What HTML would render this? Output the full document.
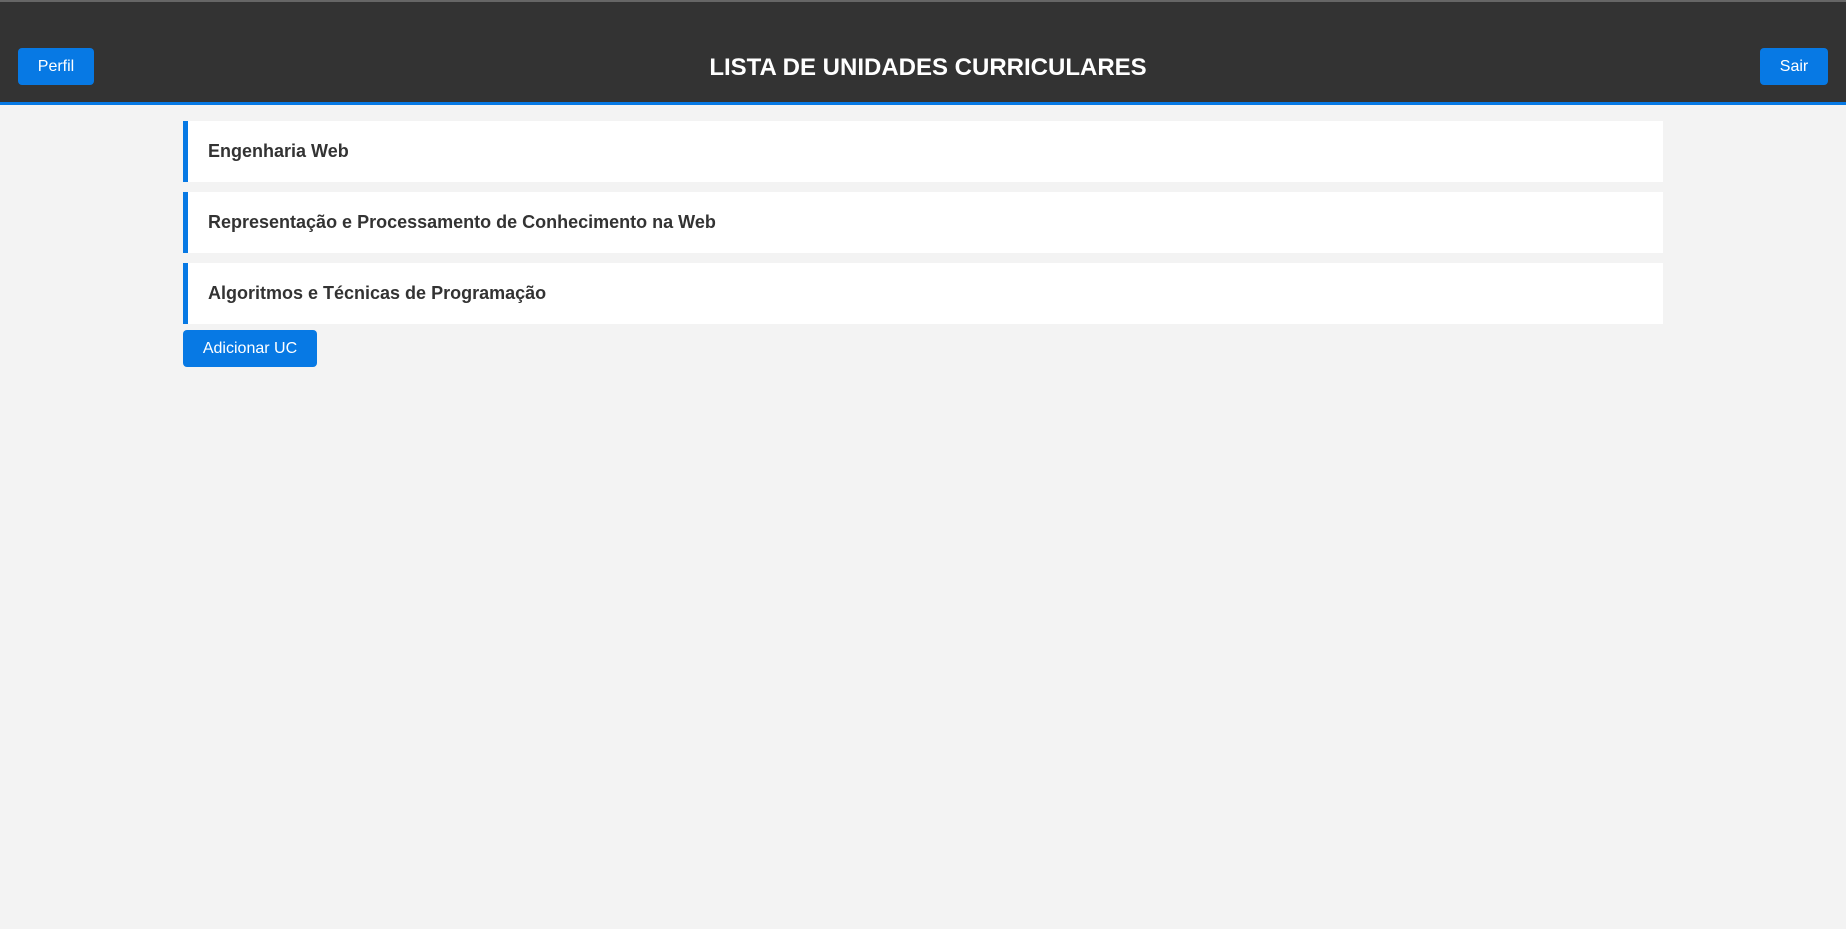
<!DOCTYPE html>
<html><head><meta charset="utf-8"><style>
html,body{margin:0;padding:0;background:#f3f3f3;font-family:"Liberation Sans",Arial,sans-serif;width:1846px;height:929px;overflow:hidden}
.hdr{position:absolute;left:0;top:0;width:1846px;height:102px;background:#333;border-top:2px solid #666;box-sizing:border-box;border-bottom:0}
.line{position:absolute;left:0;top:102px;width:1846px;height:3px;background:#0779e4}
.btn{position:absolute;background:#0779e4;color:#fff;border-radius:4px;font-size:16px;display:flex;align-items:center;justify-content:center}
.title{position:absolute;left:5px;width:1846px;top:54px;text-align:center;color:#fff;font-weight:bold;font-size:24px}
.card{position:absolute;left:183px;width:1480px;height:61px;background:#fff;border-left:5px solid #0779e4;box-sizing:border-box;padding-left:20px;display:flex;align-items:center;font-weight:bold;font-size:18px;color:#333}
</style></head><body>
<div class="hdr"></div><div class="line"></div>
<div class="btn" style="left:18px;top:48px;width:76px;height:37px">Perfil</div>
<div class="title">LISTA DE UNIDADES CURRICULARES</div>
<div class="btn" style="left:1760px;top:48px;width:68px;height:37px">Sair</div>
<div class="card" style="top:121px">Engenharia Web</div>
<div class="card" style="top:192px">Representação e Processamento de Conhecimento na Web</div>
<div class="card" style="top:263px">Algoritmos e Técnicas de Programação</div>
<div class="btn" style="left:183px;top:330px;width:134px;height:37px">Adicionar UC</div>
</body></html>
